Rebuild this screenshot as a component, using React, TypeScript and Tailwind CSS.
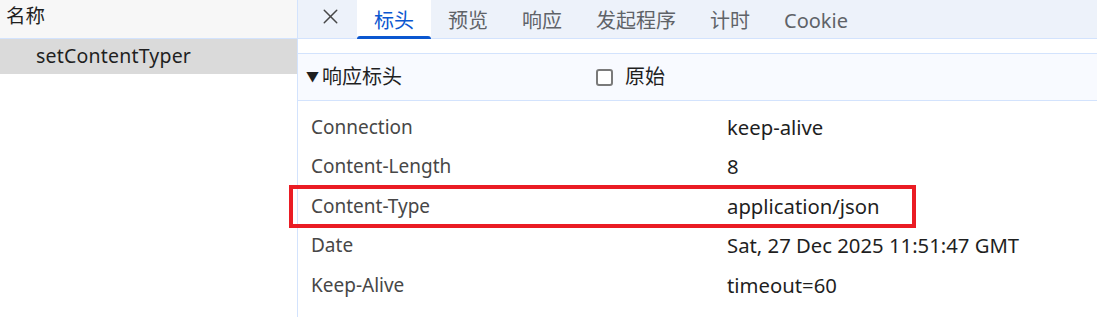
import { X } from 'lucide-react';

const font = { fontFamily: '"Noto Sans", "Noto Sans CJK SC", sans-serif' };

const tabs = ['标头', '预览', '响应', '发起程序', '计时', 'Cookie'];

const headers: [string, string][] = [
  ['Connection', 'keep-alive'],
  ['Content-Length', '8'],
  ['Content-Type', 'application/json'],
  ['Date', 'Sat, 27 Dec 2025 11:51:47 GMT'],
  ['Keep-Alive', 'timeout=60'],
];

export default function App() {
  return (
    <div className="flex h-[317px] w-full overflow-hidden bg-white text-[#1f1f1f]" style={font}>
      {/* request list */}
      <div className="flex w-[298px] shrink-0 flex-col border-r border-[#d3e3fd]">
        <div className="flex h-[39px] items-center border-b border-[#d3e3fd] bg-[#f7f7f7] pl-[6px] pb-[6px] text-[19.5px]">
          名称
        </div>
        <div className="flex h-[35px] items-center bg-[#dadada] pl-[36px] pb-[2px] text-[19.5px] tracking-[0.2px]">
          setContentTyper
        </div>
      </div>

      {/* details */}
      <div className="relative flex flex-1 flex-col">
        <div className="flex h-[39px] items-stretch border-b border-[#d3e3fd] bg-[#edf2fa]">
          <div className="flex w-[59px] items-start justify-center pl-[6px] pt-[4px] text-[#474747]">
            <X size={25} strokeWidth={1.4} />
          </div>
          {tabs.map((t, i) => (
            <div
              key={t}
              className={
                'relative flex items-center px-[17px] pt-[3px] text-[20px] ' +
                (i === 0 ? 'bg-white text-[#0b57d0]' : 'text-[#5f6368]')
              }
            >
              {t}
              {i === 0 && (
                <span className="absolute inset-x-0 bottom-[-1px] h-[3px] rounded-t-sm bg-[#0b57d0]" />
              )}
            </div>
          ))}
        </div>

        <div className="h-[15px] border-b border-[#d3e3fd]" />

        <div className="flex h-[47px] items-center border-b border-[#d3e3fd] bg-[#f8faff] pl-[8px] text-[20px]">
          <span className="text-[13px]">▼</span>
          <span className="ml-[3px]">响应标头</span>
          <span className="ml-[194px] h-[17px] w-[17px] rounded-[3px] border-2 border-[#7a7a7a] bg-white" />
          <span className="ml-[12px]">原始</span>
        </div>

        <div className="flex flex-col pt-[6px] text-[19px]">
          {headers.map(([k, v]) => (
            <div key={k} className="flex h-[39.5px] items-center">
              <span className="w-[429px] shrink-0 pl-[13px] text-[#474747]">{k}</span>
              <span className="text-[20.3px]">{v}</span>
            </div>
          ))}
        </div>

        {/* annotation */}
        <div className="pointer-events-none absolute left-[-9px] top-[185px] h-[43px] w-[627px] border-4 border-[#ea1c24]" />
      </div>
    </div>
  );
}
